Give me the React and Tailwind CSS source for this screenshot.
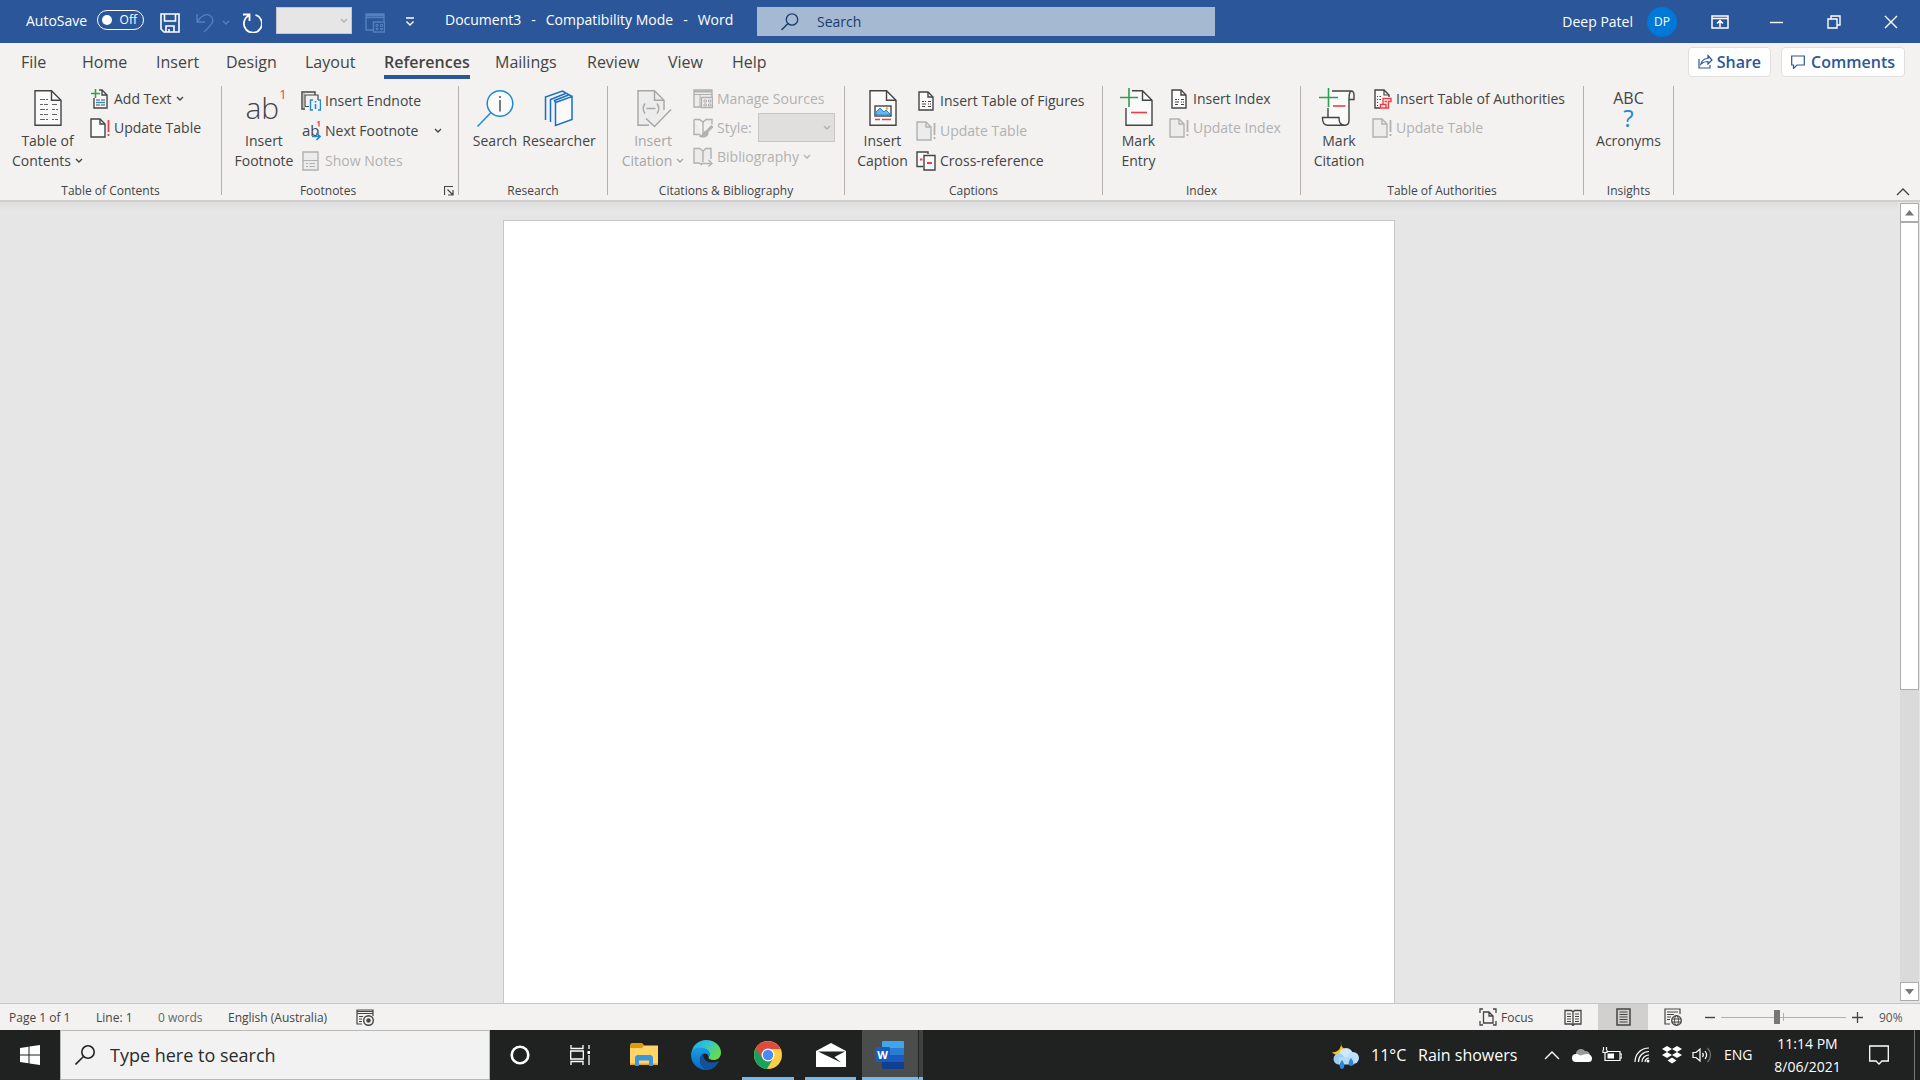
import React, { useState } from "react";

const GREY = "#444444";
const RED = "#ef3e42";
const BLUE = "#1e8bcd";
const GREEN = "#2f9e4f";
const PALE = "#fafafa";

/* ---------- shared drawing helpers ---------- */

const Svg = ({ w = 20, h = 20, className = "", children }) => (
  <svg
    width={w}
    height={h}
    viewBox={`0 0 ${w} ${h}`}
    fill="none"
    stroke="currentColor"
    className={`shrink-0 ${className}`}
    aria-hidden="true"
  >
    {children}
  </svg>
);

const Chevron = ({ className = "" }) => (
  <Svg w={8} h={6} className={className}>
    <path d="M1 1l3 3 3-3" strokeWidth="1.4" />
  </Svg>
);

const BigPage = () => (
  <>
    <path d="M7 2.7h16.5l9.5 9.5v25H7z" fill={PALE} strokeWidth="1.4" />
    <path d="M23.5 2.7v9.5H33" strokeWidth="1.4" />
  </>
);

const SmallPage = () => (
  <>
    <path d="M3 1h9l5 5v13H3z" fill={PALE} strokeWidth="1.4" />
    <path d="M12 1v5h5" strokeWidth="1.4" />
  </>
);

/* ---------- ribbon icons ---------- */

const TocIcon = () => (
  <Svg w={40} h={40}>
    <BigPage />
    <path
      d="M12 11.500h5M18 11.500h2M12 16.500h3M16 16.500h4M12 21.500h5M18 21.500h2M12 26.500h3M16 26.500h4M12 31.500h5M18 31.500h2M24 16.500h5M24 21.500h3M28 21.500h2M24 26.500h5M24 31.500h2M27 31.500h3"
      stroke="#666"
      strokeWidth="1.2"
    />
  </Svg>
);

const AddTextIcon = () => (
  <Svg>
    <path d="M4 9v10h13V6l-5-5H9" fill={PALE} strokeWidth="1.4" />
    <path d="M12 1v5h5" strokeWidth="1.4" />
    <path d="M5.500 0v9M1 4.500h9" stroke={GREEN} strokeWidth="1.6" />
    <path d="M6 11h4M11 11h4M6 16h4M11 16h4" strokeWidth="1" />
    <path d="M6 13.500h9" stroke={BLUE} strokeWidth="1.4" />
  </Svg>
);

const UpdateIcon = ({ disabled }) => (
  <Svg>
    <path d="M1 1h9l5 5v13H1z" fill={disabled ? "#ececec" : PALE} strokeWidth="1.4" />
    <path d="M10 1v5h5" strokeWidth="1.4" />
    <path
      d="M18.500 2v12M18.500 16v2"
      stroke={disabled ? "currentColor" : RED}
      strokeWidth="1.8"
    />
  </Svg>
);

const FootnoteIcon = () => (
  <div className="flex h-10 w-10 items-start justify-center text-[#444]" aria-hidden="true">
    <span className="pt-0.5 pl-1 text-[30px] leading-9 font-light">ab</span>
    <span className="text-[13px] leading-3 text-[#ef3e42]">1</span>
  </div>
);

const EndnoteIcon = () => (
  <Svg>
    <path d="M4 18H1V1h13v3" strokeWidth="1.4" />
    <path d="M4 15.500h4M4 15.500V4h13v5" strokeWidth="1.2" />
    <path d="M3 1v16" stroke="#888" />
    <path d="M12 9H9.500v10H12M17 9h2.500v10H17" stroke={BLUE} strokeWidth="1.4" />
    <path d="M14.500 10v1.600M14.500 13v5" stroke={BLUE} strokeWidth="1.6" />
  </Svg>
);

const NextFootnoteIcon = () => (
  <Svg>
    <text x="1" y="15" fontSize="15" fill={GREY} stroke="none">ab</text>
    <path d="M16.500 1.500l1.500-1v5" stroke={RED} strokeWidth="1.3" />
    <path d="M11 15.500h8M15.500 12l3.500 3.500-3.500 3.500" stroke={BLUE} strokeWidth="1.6" />
  </Svg>
);

const ShowNotesIcon = () => (
  <Svg>
    <path d="M2 1h15v18H2z" fill="#ececec" strokeWidth="1.4" />
    <path d="M2 9.500h15M5 12.500h2M8.500 12.500H14M5 15.500h2M8.500 15.500H14" />
  </Svg>
);

const SearchInfoIcon = () => (
  <Svg w={40} h={40}>
    <circle cx="25" cy="15.500" r="12.800" fill={PALE} stroke={BLUE} strokeWidth="1.5" />
    <path d="M16 24.500L2.500 38.500" stroke={BLUE} strokeWidth="1.5" />
    <path d="M25 12v11.500M25 8v2" strokeWidth="1.4" />
  </Svg>
);

const ResearcherIcon = () => (
  <Svg w={40} h={40} className="text-[#1b6ec2]">
    <g strokeWidth="1.5">
      <path d="M16.500 14.500l16.500-6v23l-16.500 6z" fill={PALE} />
      <path d="M33 8.500l-9.500-5.500L6.500 9v23" />
      <path d="M11.500 34V11.500L26.500 5.500" />
      <path d="M16.500 14.500l-1-2 14-5.500" />
    </g>
  </Svg>
);

const CitationIcon = () => (
  <Svg w={40} h={40}>
    <path d="M5 2.700h16.500l9.500 9.500v14l-9 11H5z" fill="#ececec" stroke="none" />
    <path d="M16 37.200H5V2.700h16.500l9.500 9.500V22M21.500 2.700v9.500H31" strokeWidth="1.4" />
    <path d="M12 15.500c-2.500 3.500-2.500 6.500 0 10M24 15.500c2.500 3.500 2.500 6.500 0 10M13.500 20.500h9" strokeWidth="1.4" />
    <path d="M13 30.500l8.500 8L38 21.500" strokeWidth="1.4" />
  </Svg>
);

const ManageIcon = () => (
  <Svg>
    <path d="M8 18H1V1h18v7" fill="#ececec" strokeWidth="1.4" />
    <path d="M1 2.500h18" strokeWidth="2" />
    <path d="M1 5.500h18M7 6v12" />
    <path d="M8.500 8.500h11v10h-11z" fill="#f3f2f1" strokeWidth="1.4" />
    <path d="M11 11h2.500v2H11zM15.500 11H18v2h-2.500zM11 15h2.500v2H11zM15.500 15H18v2h-2.500z" />
  </Svg>
);

const StyleIcon = () => (
  <Svg>
    <path d="M1 1.500h5.500L10 4l3-2.500h6v5M1 1.500v15h5l4 2.500" fill="#ececec" strokeWidth="1.4" />
    <path d="M10 4v12" strokeWidth="1.4" />
    <path d="M19.500 8l-6 6" strokeWidth="3" />
    <path d="M13.500 13c-4 0-3 5-7 5.500 5 1.500 9 0 8.500-4z" fill="currentColor" />
  </Svg>
);

const BibliographyIcon = () => (
  <Svg>
    <path d="M1 1.500h5.500L10 4l3-2.500h5V14H10v2l-4.500-.5H1z" fill="#ececec" stroke="none" />
    <path d="M9 18l-3-2H1V1.500h5.500L10 4l3-2.500h5V12M10 4v11" strokeWidth="1.4" />
    <path d="M8 16.500h11M15.500 13l3.500 3.500-3.500 3" strokeWidth="1.4" />
  </Svg>
);

const CaptionIcon = () => (
  <Svg w={40} h={40}>
    <BigPage />
    <rect x="12" y="18" width="16" height="10" fill="#fff" strokeWidth="1.4" />
    <path d="M13 27v-3l4-4 4 4 2-2 4 4v1z" fill="#6db5ea" stroke={BLUE} />
    <circle cx="24" cy="20.500" r="1.200" fill="#f5a623" stroke="none" />
    <path d="M12 31.500h5M19 31.500h9" stroke={RED} strokeWidth="1.6" />
  </Svg>
);

const TableListIcon = () => (
  <Svg>
    <SmallPage />
    <path d="M6 10.500h2M9 10.500h1M6 13h4M6 15.500h3M12 10.500h3M12 13h1M14 13h1M12 15.500h3" />
  </Svg>
);

const CrossRefIcon = () => (
  <Svg>
    <path d="M7 15.500H1V1h11v2" fill={PALE} strokeWidth="1.4" />
    <path d="M8 4.500h11V19H8z" fill={PALE} strokeWidth="1.4" />
    <path d="M4 8.500h2.500M11 12h5" stroke={RED} strokeWidth="1.8" />
  </Svg>
);

const MarkEntryIcon = () => (
  <Svg w={40} h={40}>
    <path d="M7 20v17.200h26v-25l-9.500-9.500H13" fill={PALE} stroke="none" />
    <path d="M7 20v17.200h26v-25l-9.500-9.500H13M23.500 2.700v9.500H33" strokeWidth="1.4" />
    <path d="M10 0v19M1 9.500h18" stroke={GREEN} strokeWidth="1.6" />
    <path d="M12 24.500h16" stroke={RED} strokeWidth="1.6" />
  </Svg>
);

const MarkCitationIcon = () => (
  <Svg w={40} h={40}>
    <path d="M9 4h20v30l-3 3-7-7H9z" fill={PALE} stroke="none" />
    <path d="M13 3h19c2.500 0 3 2 3 4v4.500h-5M32 3c-2 1.500-2 4-2 8.500v21c0 3-1.500 4.700-4 4.700" strokeWidth="1.4" />
    <path d="M9 20v9.500M3.500 29.500H20c0 5 1 7.700 6 7.700H8.500c-4 0-5-3-5-7.700z" fill={PALE} strokeWidth="1.4" />
    <path d="M9.500 0v19M0 9.500h19" stroke={GREEN} strokeWidth="1.6" />
    <path d="M14 18h12.500" stroke={RED} strokeWidth="1.6" />
  </Svg>
);

const AuthoritiesIcon = () => (
  <Svg>
    <path d="M8 19H3V1h9l5 5v2" fill={PALE} strokeWidth="1.4" />
    <path d="M12 1v5h5M5 7.500h1M7.500 7.500H9M5 10.500h1M7.500 10.500H9M5 13.500h1M5 16.500h1" strokeWidth="1.2" />
    <path d="M11 15.500V9.500h8v3h-2.500V19H8.500v-3.500H14V19M12.500 12.500H15" stroke={RED} strokeWidth="1.4" />
  </Svg>
);

const AcronymsIcon = () => (
  <div className="flex h-10 w-10 flex-col items-center text-[#444]" aria-hidden="true">
    <span className="text-base leading-5">ABC</span>
    <span className="text-2xl leading-5 text-[#1e8bcd]">?</span>
  </div>
);

/* ---------- ribbon parts ---------- */

const BigButton = ({ icon, lines, menu, disabled, className }) => (
  <button
    type="button"
    disabled={disabled}
    className={`flex flex-col items-center pt-1 ${disabled ? "text-[#a6a6a6]" : "text-[#444]"} ${className}`}
  >
    {icon}
    <span className="mt-[3px] whitespace-nowrap">
      {lines.map((line, i) => (
        <span key={line} className="flex items-center justify-center gap-1 leading-5">
          {line}
          {menu && i === lines.length - 1 && <Chevron />}
        </span>
      ))}
    </span>
  </button>
);

const RowButton = ({ icon, label, menu, disabled, tall, wideMenu }) => (
  <button
    type="button"
    disabled={disabled}
    className={`flex items-center whitespace-nowrap ${tall ? "h-[30px]" : "h-[29px]"} ${
      disabled ? "text-[#b1b1b1]" : "text-[#444]"
    }`}
  >
    {icon}
    <span className="ml-1">{label}</span>
    {menu && <Chevron className={wideMenu ? "ml-4" : "ml-1"} />}
  </button>
);

const Group = ({ title, className, launcher, children }) => (
  <>
    <section className={`relative flex flex-col pt-1 ${className}`} aria-label={title}>
      <div className="flex flex-1 items-start">{children}</div>
      <div
        className={`-ml-2 h-[19px] text-center text-xs leading-5 text-[#444] ${launcher ? "pr-6" : ""}`}
      >
        {title}
      </div>
      {launcher && (
        <button type="button" aria-label={`${title} settings`} className="absolute right-1 bottom-1 text-[#444]">
          <Svg w={10} h={10}>
            <path d="M.5 9V.5H9M3.500 3.500l5 5M9 4v5H4" strokeWidth="1.2" />
          </Svg>
        </button>
      )}
    </section>
    <div className="mt-1.5 mb-[5px] w-px shrink-0 bg-[#b3b0ad]" />
  </>
);

/* ---------- title bar ---------- */

const TitleBar = () => {
  const [autoSave, setAutoSave] = useState(false);

  return (
    <header className="flex h-[43px] shrink-0 items-center bg-[#2b579a] text-sm text-white">
      <div className="flex w-[445px] shrink-0 items-center pl-[26px]">
        <label htmlFor="autosave" className="w-[71px] pb-0.5">AutoSave</label>
        <button
          id="autosave"
          type="button"
          onClick={() => setAutoSave(!autoSave)}
          className="mb-1 flex h-5 w-[47px] items-center justify-between rounded-full border border-white pr-1.5 pl-1 text-xs"
        >
          <span className="size-2.5 rounded-full bg-white" />
          {autoSave ? "On" : "Off"}
        </button>
        <button type="button" aria-label="Save" className="mt-0.5 ml-4">
          <Svg>
            <path d="M1 1h18v18H4l-3-3zM4.500 1v7h11V1M6 19v-6h8v6M9 19v-3" strokeWidth="1.6" />
          </Svg>
        </button>
        <button type="button" aria-label="Undo" className="mt-0.5 ml-4 flex items-center gap-1.5 text-[#5580bd]" disabled>
          <Svg>
            <path d="M1 1v8h8M1 9C5 3 10 0 14 2.500c6 4 2 9-6 16.500" strokeWidth="1.4" />
          </Svg>
          <Chevron />
        </button>
        <button type="button" aria-label="Redo" className="mt-0.5 ml-3">
          <Svg>
            <path d="M1 1.500h6.500V8M7 2.500A9 9 0 1 0 13.500 2" strokeWidth="1.8" />
          </Svg>
        </button>
        <div className="relative mb-0.5 ml-3.5 h-[27px] w-[76px] text-[#b1b1b1]">
          <select aria-label="Style" disabled className="h-full w-full appearance-none border border-[#c8c6c4] bg-[#e6e6e6]" />
          <Chevron className="absolute top-[11px] right-1" />
        </div>
        <button type="button" aria-label="Manage sources" className="mt-0.5 ml-[13px] text-[#5580bd]" disabled>
          <Svg>
            <path d="M8 17H1V1h18v7M1 2.500h18M1 4.500h18M8.500 9h11v10h-11z" strokeWidth="1.4" />
            <path d="M11 11.500h2v2h-2zM15.500 11.500h2v2h-2zM11 15.500h2v1h-2zM15.500 15.500h2v1h-2z" />
          </Svg>
        </button>
        <button type="button" aria-label="Customize toolbar" className="ml-5">
          <Svg w={10} h={9}>
            <path d="M1 1h8M1.500 4.500L5 8l3.500-3.500" strokeWidth="1.4" />
          </Svg>
        </button>
      </div>
      <h1 className="flex w-[312px] shrink-0 gap-2.5 pb-1 whitespace-nowrap">
        <span>Document3</span>
        <span>-</span>
        <span>Compatibility Mode</span>
        <span>-</span>
        <span>Word</span>
      </h1>
      <label className="flex h-[29px] w-[458px] shrink-0 items-center bg-[#a6b9d2] pl-6 text-[#183a70]">
        <Svg w={18} h={18}>
          <circle cx="11" cy="6.500" r="5.700" strokeWidth="1.3" />
          <path d="M7 10.500L.5 17" strokeWidth="1.4" />
        </Svg>
        <input
          type="text"
          aria-label="Search"
          placeholder="Search"
          className="ml-[18px] w-full bg-transparent outline-none placeholder:text-[#183a70]"
        />
      </label>
      <div className="ml-auto flex items-center">
        <span>Deep Patel</span>
        <span className="ml-3.5 flex size-[30px] items-center justify-center rounded-full bg-[#0078d7] text-xs">DP</span>
        <div className="ml-[30px] flex">
          <button type="button" aria-label="Ribbon display options" className="flex w-[57px] justify-start pl-1">
            <Svg w={18} h={14}>
              <path d="M1 1h16v12H1zM1 3.500h16M9 12V6M6 8.500L9 5.500l3 3" strokeWidth="1.5" />
            </Svg>
          </button>
          <button type="button" aria-label="Minimize" className="flex w-[57px] items-center pl-1.5">
            <Svg w={13} h={14}>
              <path d="M0 7.500h13" strokeWidth="1.4" />
            </Svg>
          </button>
          <button type="button" aria-label="Restore" className="flex w-[57px] items-center pl-1.5">
            <Svg w={14} h={14}>
              <path d="M1 4h9v9H1zM4 4V1h9v9h-3" strokeWidth="1.4" />
            </Svg>
          </button>
          <button type="button" aria-label="Close" className="flex w-[42px] items-center pl-1.5">
            <Svg w={14} h={14}>
              <path d="M1 1l12 12M13 1L1 13" strokeWidth="1.4" />
            </Svg>
          </button>
        </div>
      </div>
    </header>
  );
};

/* ---------- tab strip ---------- */

const tabs = [
  { name: "File", width: "w-[61px]" },
  { name: "Home", width: "w-[74px]" },
  { name: "Insert", width: "w-[70px]" },
  { name: "Design", width: "w-[79px]" },
  { name: "Layout", width: "w-[79px]" },
  { name: "References", width: "w-[111px]" },
  { name: "Mailings", width: "w-[92px]" },
  { name: "Review", width: "w-[81px]" },
  { name: "View", width: "w-[64px]" },
  { name: "Help", width: "w-[60px]" },
];

const TabStrip = () => {
  const [active, setActive] = useState("References");

  return (
    <nav className="flex h-[37px] shrink-0 items-center pl-[21px] text-base text-[#444]">
      {tabs.map((tab) => (
        <div key={tab.name} className={`h-full shrink-0 ${tab.width}`}>
          <button
            type="button"
            onClick={() => setActive(tab.name)}
            className={`h-9 border-b-4 pt-1.5 ${
              active === tab.name ? "border-[#2b579a] font-semibold" : "border-transparent"
            }`}
          >
            {tab.name}
          </button>
        </div>
      ))}
      <div className="mr-[15px] ml-auto flex gap-2.5 font-semibold text-[#2b579a]">
        <button type="button" className="flex h-[30px] items-center gap-1 rounded border border-[#e1dfdd] bg-white px-[9px]">
          <Svg w={15} h={15}>
            <path d="M1 5v9h11v-3M3 10c1-4 3-5.500 7-5.500V1.500L14 6l-4 4V7.500c-3 0-5 .5-7 2.500z" strokeWidth="1.2" />
          </Svg>
          Share
        </button>
        <button type="button" className="flex h-[30px] items-center gap-1.5 rounded border border-[#e1dfdd] bg-white px-[9px]">
          <Svg w={14} h={14}>
            <path d="M.7 1h12.600v9H6l-3.500 3.500V10H.7z" strokeWidth="1.2" />
          </Svg>
          Comments
        </button>
      </div>
    </nav>
  );
};

/* ---------- ribbon ---------- */

const Ribbon = () => (
  <div className="flex h-[120px] shrink-0 text-sm">
    <Group title="Table of Contents" className="w-[221px] pl-2">
      <BigButton icon={<TocIcon />} lines={["Table of", "Contents"]} menu className="w-[79px]" />
      <div className="ml-[3px] flex flex-col items-start">
        <RowButton icon={<AddTextIcon />} label="Add Text" menu />
        <RowButton icon={<UpdateIcon />} label="Update Table" />
      </div>
    </Group>
    <Group title="Footnotes" className="w-[236px] pl-2" launcher>
      <BigButton icon={<FootnoteIcon />} lines={["Insert", "Footnote"]} className="w-[68px]" />
      <div className="mt-0.5 ml-[3px] flex flex-col items-start">
        <RowButton tall icon={<EndnoteIcon />} label="Insert Endnote" />
        <RowButton tall icon={<NextFootnoteIcon />} label="Next Footnote" menu wideMenu />
        <RowButton tall icon={<ShowNotesIcon />} label="Show Notes" disabled />
      </div>
    </Group>
    <Group title="Research" className="w-[148px] pl-2">
      <BigButton icon={<SearchInfoIcon />} lines={["Search"]} className="w-14" />
      <BigButton icon={<ResearcherIcon />} lines={["Researcher"]} className="w-[72px]" />
    </Group>
    <Group title="Citations & Bibliography" className="w-[236px] pl-2">
      <BigButton icon={<CitationIcon />} lines={["Insert", "Citation"]} menu disabled className="w-[74px]" />
      <div className="ml-[3px] flex flex-col items-start">
        <RowButton icon={<ManageIcon />} label="Manage Sources" disabled />
        <div className="flex h-[29px] items-center text-[#b1b1b1]">
          <StyleIcon />
          <label htmlFor="citation-style" className="ml-1 w-[41px]">Style:</label>
          <div className="relative h-[29px] w-[77px]">
            <select
              id="citation-style"
              disabled
              className="h-full w-full appearance-none border border-[#c8c6c4] bg-[#e1dfdd]"
            />
            <Chevron className="absolute top-3 right-1" />
          </div>
        </div>
        <RowButton icon={<BibliographyIcon />} label="Bibliography" menu disabled />
      </div>
    </Group>
    <Group title="Captions" className="w-[257px] pl-2">
      <BigButton icon={<CaptionIcon />} lines={["Insert", "Caption"]} className="w-[59px]" />
      <div className="mt-0.5 ml-1 flex flex-col items-start">
        <RowButton tall icon={<TableListIcon />} label="Insert Table of Figures" />
        <RowButton tall icon={<UpdateIcon disabled />} label="Update Table" disabled />
        <RowButton tall icon={<CrossRefIcon />} label="Cross-reference" />
      </div>
    </Group>
    <Group title="Index" className="w-[197px] pl-2">
      <BigButton icon={<MarkEntryIcon />} lines={["Mark", "Entry"]} className="w-[55px]" />
      <div className="ml-[3px] flex flex-col items-start">
        <RowButton icon={<TableListIcon />} label="Insert Index" />
        <RowButton icon={<UpdateIcon disabled />} label="Update Index" disabled />
      </div>
    </Group>
    <Group title="Table of Authorities" className="w-[282px] pl-2">
      <BigButton icon={<MarkCitationIcon />} lines={["Mark", "Citation"]} className="w-[60px]" />
      <div className="ml-[3px] flex flex-col items-start">
        <RowButton icon={<AuthoritiesIcon />} label="Insert Table of Authorities" />
        <RowButton icon={<UpdateIcon disabled />} label="Update Table" disabled />
      </div>
    </Group>
    <Group title="Insights" className="w-[89px] pl-2">
      <BigButton icon={<AcronymsIcon />} lines={["Acronyms"]} className="w-[73px]" />
    </Group>
    <button type="button" aria-label="Collapse ribbon" className="mr-2.5 mb-1 ml-auto self-end text-[#444]">
      <Svg w={14} h={8}>
        <path d="M1 7l6-6 6 6" strokeWidth="1.4" />
      </Svg>
    </button>
  </div>
);

/* ---------- document area ---------- */

const DocumentArea = () => (
  <main className="flex min-h-0 flex-1 border-t-2 border-[#d0cecc] bg-[#e6e6e6]">
    <div className="flex flex-1 justify-center bg-linear-to-b from-[#dcdcdc] to-[#e6e6e6] to-[8px] pt-[18px]">
      <div className="w-[892px] border border-b-0 border-[#c6c6c6] bg-white" />
    </div>
    <div className="flex w-[22px] flex-col pt-px pr-px pb-0.5 pl-0.5">
      <button type="button" aria-label="Scroll up" className="flex h-[19px] items-center justify-center border border-[#ababab] bg-white">
        <Svg w={9} h={6}>
          <path d="M0 5.500L4.500 0 9 5.500z" fill="#777" stroke="none" />
        </Svg>
      </button>
      <div className="flex-1 bg-[#dadada]">
        <div className="h-8/13 border border-[#ababab] bg-white" />
      </div>
      <button type="button" aria-label="Scroll down" className="flex h-[19px] items-center justify-center border border-[#ababab] bg-white">
        <Svg w={9} h={6}>
          <path d="M0 0L4.500 5.500 9 0z" fill="#777" stroke="none" />
        </Svg>
      </button>
    </div>
  </main>
);

/* ---------- status bar ---------- */

const StatusBar = () => {
  const [zoom, setZoom] = useState(90);

  return (
    <footer className="flex h-[27px] shrink-0 items-center border-t border-[#c6c6c6] pl-[9px] text-xs text-[#444]">
      <span className="w-[87px] pt-px">Page 1 of 1</span>
      <span className="w-[62px] pt-px">Line: 1</span>
      <span className="w-[70px] pt-px text-[#666]">0 words</span>
      <span className="w-32 pt-px">English (Australia)</span>
      <button type="button" aria-label="Macro recording">
        <Svg w={18} h={17}>
          <path d="M6 15H1V1h16v6M1 2.500h16M1 4.500h16M3 7.500h4M3 10h3M3 12.500h3" strokeWidth="1.2" />
          <circle cx="12.500" cy="11.500" r="4.800" strokeWidth="1.4" />
          <circle cx="12.500" cy="11.500" r="2.200" fill="currentColor" stroke="none" />
        </Svg>
      </button>
      <div className="ml-auto flex h-full items-center">
        <button type="button" className="flex w-[69px] items-center gap-1">
          <Svg w={18} h={18}>
            <path d="M4 1H1v4M14 1h3v4M4 17H1v-4M14 17h3v-4" strokeWidth="1.3" />
            <path d="M4.500 4h5.500l4 4v7H4.500zM10 4v4h4" strokeWidth="1.3" />
          </Svg>
          <span className="pt-px">Focus</span>
        </button>
        <button type="button" aria-label="Read mode" className="flex h-full w-[50px] items-center justify-center">
          <Svg w={18} h={17}>
            <path d="M1 1.500h6.500L9 3l1.500-1.500H17V15h-6.500L9 16.500 7.500 15H1zM9 3v13" strokeWidth="1.3" />
            <path d="M3 5h4M3 7.500h4M3 10h4M3 12.500h4M11 5h4M11 7.500h4M11 10h4M11 12.500h4" />
          </Svg>
        </button>
        <button type="button" aria-label="Print layout" className="flex h-full w-[50px] items-center justify-center bg-[#d2d0ce]">
          <Svg w={15} h={18}>
            <path d="M1 1h13v16H1z" strokeWidth="1.5" />
            <path d="M3.500 4h8M3.500 6.500h8M3.500 9h8M3.500 11.500h8M3.500 14h8" strokeWidth="1.2" />
          </Svg>
        </button>
        <button type="button" aria-label="Web layout" className="flex h-full w-[50px] items-center justify-center">
          <Svg w={18} h={18}>
            <path d="M6 16H1V1h15v5M3 4h11M3 6.500h7M3 9h4M3 11.500h3" strokeWidth="1.2" />
            <circle cx="12.500" cy="12.500" r="4.800" strokeWidth="1.3" />
            <ellipse cx="12.500" cy="12.500" rx="2" ry="4.800" />
            <path d="M8 11h9M8 14h9" />
          </Svg>
        </button>
        <button type="button" aria-label="Zoom out" className="ml-[7px]">
          <Svg w={10} h={11}>
            <path d="M0 5.500h10" strokeWidth="1.4" />
          </Svg>
        </button>
        <input
          type="range"
          aria-label="Zoom"
          min="10"
          max="190"
          value={zoom}
          onChange={(e) => setZoom(Number(e.target.value))}
          className="mx-1.5 h-3.5 w-[125px] appearance-none bg-[linear-gradient(#b0b0b0,#b0b0b0),linear-gradient(#b0b0b0,#b0b0b0)] bg-[length:100%_1px,1px_8px] bg-center bg-no-repeat [&::-webkit-slider-thumb]:h-3.5 [&::-webkit-slider-thumb]:w-1.5 [&::-webkit-slider-thumb]:appearance-none [&::-webkit-slider-thumb]:bg-[#777]"
        />
        <button type="button" aria-label="Zoom in">
          <Svg w={11} h={11}>
            <path d="M0 5.500h11M5.500 0v11" strokeWidth="1.3" />
          </Svg>
        </button>
        <span className="w-[57px] pt-px pl-4 text-[#555]">{zoom}%</span>
      </div>
    </footer>
  );
};

/* ---------- taskbar ---------- */

const ExplorerIcon = () => (
  <Svg w={28} h={24}>
    <g stroke="none">
      <path d="M0 1.500L1.500 0H12l2 2v3H0z" fill="#e09a0b" />
      <path d="M0 5h12l2-2.500h14V22H0z" fill="#ffd567" />
      <path d="M0 20.500h28V22H0z" fill="#e8a91c" />
      <path d="M5 23V14l2-2h14l2 2v9h-4v-5.500H9V23z" fill="#3a96dd" />
    </g>
  </Svg>
);

const EdgeIcon = () => (
  <Svg w={30} h={30}>
    <defs>
      <linearGradient id="edgeTop" x1="0" y1="0" x2="1" y2="0.5">
        <stop offset="0" stopColor="#2aa5e0" />
        <stop offset="0.5" stopColor="#2fc4d5" />
        <stop offset="1" stopColor="#65dc4b" />
      </linearGradient>
      <linearGradient id="edgeLow" x1="0" y1="0" x2="0" y2="1">
        <stop offset="0" stopColor="#1b9de2" />
        <stop offset="1" stopColor="#0669c4" />
      </linearGradient>
    </defs>
    <g stroke="none">
      <path d="M.5 13C1.500 5 8 0 15 0c9 0 15 6 15 12.500 0 5-3.500 7.500-7.500 7.500-3 0-5-1-5-2.500 0-1 1-1.500 1-3.500 0-3-3-5.500-7.500-5.500C6 8.500 2 10.500.5 13z" fill="url(#edgeTop)" />
      <path d="M0 15c0-5 4-7.500 9-7.500 5.500 0 9.500 3 9.500 6.500 0 1-.5 2-1 2.500-.5-2-2-3-3.500-3-3 0-5 3-5 6.500 0 5 4 9 9 9.500-1 .5-2 .5-3 .5C7 30 0 23.500 0 15z" fill="url(#edgeLow)" />
      <path d="M9 20c0-3.500 1.500-5.500 3.500-6.300C11.500 18 15 22.500 21 22.500c3 0 5-.8 7-1.700-1.500 4.500-6 9.200-11.500 9.200C12 29.500 9 25 9 20z" fill="#11519d" />
    </g>
  </Svg>
);

const ChromeIcon = () => (
  <Svg w={28} h={28}>
    <g stroke="none">
      <circle cx="14" cy="14" r="14" fill="#ffcd40" />
      <path d="M14 14L1.900 7A14 14 0 0 0 13 28l6-10.500z" fill="#19a15f" />
      <path d="M14 14L8 17.500 1.900 7A14 14 0 0 1 26.500 8H14z" fill="#de4b3c" />
      <circle cx="14" cy="14" r="6.500" fill="#fff" />
      <circle cx="14" cy="14" r="5.200" fill="#4a8af4" />
    </g>
  </Svg>
);

const MailIcon = () => (
  <Svg w={30} h={24}>
    <path d="M0 8L15 0l15 8v16H0z" fill="#fff" stroke="none" />
    <path d="M2 8.500h27L18.500 14l6.500 5.500z" fill="#202121" stroke="none" />
  </Svg>
);

const WordIcon = () => (
  <Svg w={30} h={28}>
    <g stroke="none">
      <path d="M8 0h20a1 1 0 0 1 1 1v6H7V1a1 1 0 0 1 1-1z" fill="#41a5ee" />
      <path d="M7 7h22v7H7z" fill="#2b7cd3" />
      <path d="M7 14h22v7H7z" fill="#185abd" />
      <path d="M7 21h22v6a1 1 0 0 1-1 1H8a1 1 0 0 1-1-1z" fill="#103f91" />
      <rect x="0" y="6" width="15" height="15" rx="1" fill="#185abd" />
      <text x="7.500" y="17.500" fontSize="11" fontWeight="700" textAnchor="middle" fill="#fff">W</text>
    </g>
  </Svg>
);

const WeatherIcon = () => (
  <Svg w={28} h={28}>
    <g stroke="none">
      <path d="M10 0c-1 5 3 10 9 9-3 6-13 8-18 2 6 1 10-4 9-11z" fill="#f9c31f" />
      <circle cx="15" cy="14" r="7" fill="#cfe9fb" />
      <circle cx="8" cy="18" r="5.500" fill="#9dcdf5" />
      <circle cx="22" cy="17" r="6" fill="#bfe0fa" />
      <path d="M8 16h15v7.500H8z" fill="#b3daf8" />
      <path d="M11 19c4 5 2 9 0 9s-4-4 0-9zM20 17c4 5 2 8 0 8s-4-3 0-8z" fill="#2f87dc" />
    </g>
  </Svg>
);

const Taskbar = () => (
  <div className="flex h-[50px] shrink-0 items-stretch bg-[#202121] text-white">
    <button type="button" aria-label="Start" className="flex w-[60px] items-center justify-center">
      <Svg>
        <path d="M0 3l8.500-1.200v7.700H0zM9.500 1.600L20 0v9.500H9.500zM0 10.500h8.500v7.700L0 17zM9.500 10.500H20V20L9.500 18.400z" fill="#fff" stroke="none" />
      </Svg>
    </button>
    <label className="flex w-[430px] items-center border border-[#b8b8b8] bg-[#f2f2f2] pl-3.5 text-[#222]">
      <Svg>
        <circle cx="13" cy="7" r="6.200" strokeWidth="1.6" />
        <path d="M8.500 11.500L.5 19.500" strokeWidth="1.6" />
      </Svg>
      <input
        type="text"
        aria-label="Type here to search"
        placeholder="Type here to search"
        className="ml-[15px] w-full bg-transparent text-lg outline-none placeholder:text-[#2b2b2b]"
      />
    </label>
    <button type="button" aria-label="Cortana" className="flex w-[60px] items-center justify-center">
      <Svg>
        <circle cx="10" cy="10" r="8.300" strokeWidth="2.600" />
      </Svg>
    </button>
    <button type="button" aria-label="Task view" className="flex w-[60px] items-center justify-center">
      <Svg>
        <path d="M1 0v3.500h12V0M1 20v-3.500h12V20M.7 6h12.600v8H.7zM19 0v4M19 10v10" strokeWidth="1.3" />
        <path d="M17.500 6h3v3h-3z" fill="#fff" stroke="none" />
      </Svg>
    </button>
    <button type="button" aria-label="File Explorer" className="ml-1 flex w-[60px] items-center justify-center">
      <ExplorerIcon />
    </button>
    <button type="button" aria-label="Edge" className="flex w-[63px] items-center justify-center">
      <EdgeIcon />
    </button>
    <button type="button" aria-label="Chrome" className="mx-[5px] flex w-[52px] items-center justify-center border-y-3 border-t-transparent border-b-[#76b9ed]">
      <ChromeIcon />
    </button>
    <button type="button" aria-label="Mail" className="mx-1.5 flex w-[51px] items-center justify-center border-y-3 border-t-transparent border-b-[#76b9ed]">
      <MailIcon />
    </button>
    <button type="button" aria-label="Word" className="flex w-14 items-center justify-center border-y-3 border-t-[#4b4c4c] border-b-[#76b9ed] bg-[#4b4c4c]">
      <WordIcon />
    </button>
    <div className="w-[5px] border-b-3 border-l border-[#76b9ed] border-l-[#202121] bg-[#404141]" />
    <div className="ml-auto flex items-center">
      <WeatherIcon />
      <span className="ml-3 w-[47px] text-base">11°C</span>
      <span className="w-[126px] text-base whitespace-nowrap">Rain showers</span>
      <button type="button" aria-label="Show hidden icons" className="w-7">
        <Svg w={16} h={9}>
          <path d="M1 8l7-7 7 7" strokeWidth="1.4" />
        </Svg>
      </button>
      <Svg w={20} h={14}>
        <path d="M4 6a5 5 0 0 1 9-3 5 5 0 0 1 5 4L8 12z" fill="#999" stroke="none" />
        <path d="M4 14a4 4 0 0 1 0-8c2 0 3 .5 4 1.500L14 6c4 0 6 2 6 4.500A3.500 3.500 0 0 1 16.500 14z" fill="#fff" stroke="none" />
      </Svg>
      <Svg w={20} h={16} className="ml-2.5">
        <path d="M5 4.500h13v9H3V9M18.500 7h1.500v4h-1.500M1 3v2.500h4V3M1.500 0v3M4.500 0v3M3 6v4" strokeWidth="1.2" />
        <path d="M5.500 6.500H12v5H5.500z" fill="#fff" stroke="none" />
      </Svg>
      <Svg w={16} h={16} className="ml-3">
        <path d="M1 15C1 7 7 1 15 1M4.500 15C4.500 9 9 4.500 15 4.500M8 15c0-4 3-7 7-7M11 15c0-2 2-4 4-4" strokeWidth="1.2" />
        <circle cx="14" cy="14" r="1.500" fill="#fff" stroke="none" />
      </Svg>
      <Svg w={20} h={18} className="ml-3">
        <path d="M5 0l5 3-5 3-5-3zM15 0l5 3-5 3-5-3zM5 6l5 3-5 3-5-3zM15 6l5 3-5 3-5-3zM10 11.500l4.500 3L10 17.500l-4.500-3z" fill="#fff" stroke="none" />
      </Svg>
      <Svg w={20} h={16} className="ml-2.5">
        <path d="M1 5.500h3L8 2v12l-4-3.500H1z" strokeWidth="1.2" />
        <path d="M10.500 6c1 1.200 1 2.800 0 4M13 4c2 2.500 2 5.500 0 8" strokeWidth="1.2" />
        <path d="M15.500 1c4 4 4 10 0 14" stroke="#777" strokeWidth="1.2" />
      </Svg>
      <span className="w-[62px] pl-3 text-sm">ENG</span>
      <div className="w-[67px] text-center text-sm leading-[23px] whitespace-nowrap">
        <div>11:14 PM</div>
        <div>8/06/2021</div>
      </div>
      <button type="button" aria-label="Notifications" className="ml-7">
        <Svg w={20} h={20}>
          <path d="M.7 1h18.600v15h-6.300L10 19l-3-3H.7z" strokeWidth="1.3" />
        </Svg>
      </button>
      <div className="ml-[25px] h-[50px] w-1.5 border-l border-[#777]" />
    </div>
  </div>
);

const App = () => (
  <div className="flex h-screen flex-col overflow-hidden bg-[#f3f2f1] font-['Open_Sans','Noto_Sans',sans-serif]">
    <TitleBar />
    <TabStrip />
    <Ribbon />
    <DocumentArea />
    <StatusBar />
    <Taskbar />
  </div>
);

export default App;
